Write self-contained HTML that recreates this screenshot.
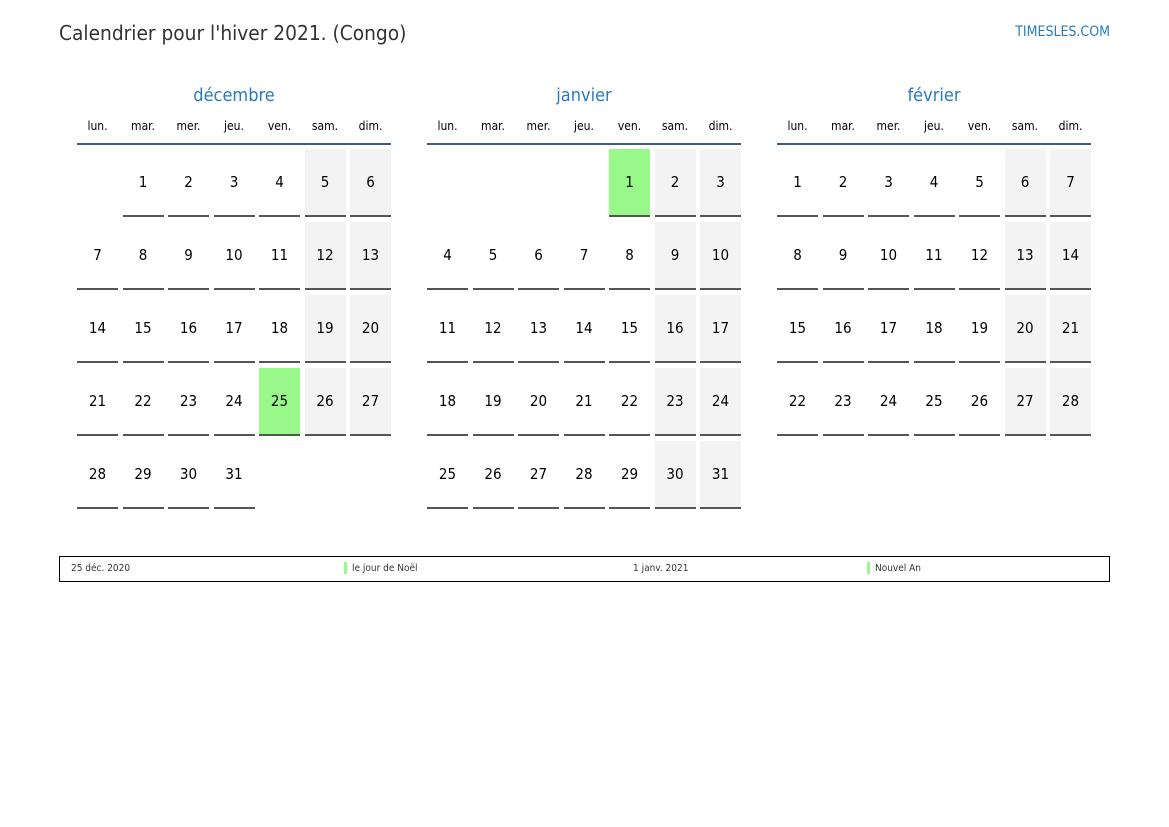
<!DOCTYPE html>
<html><head><meta charset="utf-8"><style>
*{margin:0;padding:0;box-sizing:border-box}
body{width:1169px;height:827px;background:#fff;position:relative;font-family:"DejaVu Sans Condensed","DejaVu Sans","Liberation Sans",sans-serif;color:#000;overflow:hidden}
.title{position:absolute;left:59px;top:21px;font-size:20.7px;color:#333}
.site{position:absolute;right:59px;top:24px;font-size:14px;color:#2a7ac0}
.month{position:absolute;top:85px;width:314px}
.mname{text-align:center;font-size:18px;color:#2a7ac0;height:31px}
.wd{display:grid;grid-template-columns:repeat(7,41px);column-gap:4.5px;font-size:12px;text-align:center;height:27px;line-height:20px}
.hr{height:2px;background:#3a5a8a;margin-bottom:4px}
.grid{display:grid;grid-template-columns:repeat(7,41px);column-gap:4.5px;row-gap:5px}
.c{height:68px;border-bottom:2px solid #555;font-size:15px;text-align:center;line-height:66px}
.e{border-bottom:none}
.w{background:#f3f3f3}
.h{background:#98f98a}
.legend{position:absolute;left:59px;top:556px;width:1051px;height:26px;border:1px solid #000;font-size:10px;color:#333}
.legend span{position:absolute;top:6px}
.bar{display:inline-block;width:3px;height:12px;background:#98f98a;position:absolute;top:5px}
</style></head><body>
<div class="title">Calendrier pour l'hiver 2021. (Congo)</div>
<div class="site">TIMESLES.COM</div>

<div class="month" style="left:77px">
<div class="mname">décembre</div>
<div class="wd"><div>lun.</div><div>mar.</div><div>mer.</div><div>jeu.</div><div>ven.</div><div>sam.</div><div>dim.</div></div>
<div class="hr"></div>
<div class="grid">
<div class="c e"></div><div class="c">1</div><div class="c">2</div><div class="c">3</div><div class="c">4</div><div class="c w">5</div><div class="c w">6</div>
<div class="c">7</div><div class="c">8</div><div class="c">9</div><div class="c">10</div><div class="c">11</div><div class="c w">12</div><div class="c w">13</div>
<div class="c">14</div><div class="c">15</div><div class="c">16</div><div class="c">17</div><div class="c">18</div><div class="c w">19</div><div class="c w">20</div>
<div class="c">21</div><div class="c">22</div><div class="c">23</div><div class="c">24</div><div class="c h">25</div><div class="c w">26</div><div class="c w">27</div>
<div class="c">28</div><div class="c">29</div><div class="c">30</div><div class="c">31</div>
</div></div>

<div class="month" style="left:427px">
<div class="mname">janvier</div>
<div class="wd"><div>lun.</div><div>mar.</div><div>mer.</div><div>jeu.</div><div>ven.</div><div>sam.</div><div>dim.</div></div>
<div class="hr"></div>
<div class="grid">
<div class="c e"></div><div class="c e"></div><div class="c e"></div><div class="c e"></div><div class="c h">1</div><div class="c w">2</div><div class="c w">3</div>
<div class="c">4</div><div class="c">5</div><div class="c">6</div><div class="c">7</div><div class="c">8</div><div class="c w">9</div><div class="c w">10</div>
<div class="c">11</div><div class="c">12</div><div class="c">13</div><div class="c">14</div><div class="c">15</div><div class="c w">16</div><div class="c w">17</div>
<div class="c">18</div><div class="c">19</div><div class="c">20</div><div class="c">21</div><div class="c">22</div><div class="c w">23</div><div class="c w">24</div>
<div class="c">25</div><div class="c">26</div><div class="c">27</div><div class="c">28</div><div class="c">29</div><div class="c w">30</div><div class="c w">31</div>
</div></div>

<div class="month" style="left:777px">
<div class="mname">février</div>
<div class="wd"><div>lun.</div><div>mar.</div><div>mer.</div><div>jeu.</div><div>ven.</div><div>sam.</div><div>dim.</div></div>
<div class="hr"></div>
<div class="grid">
<div class="c">1</div><div class="c">2</div><div class="c">3</div><div class="c">4</div><div class="c">5</div><div class="c w">6</div><div class="c w">7</div>
<div class="c">8</div><div class="c">9</div><div class="c">10</div><div class="c">11</div><div class="c">12</div><div class="c w">13</div><div class="c w">14</div>
<div class="c">15</div><div class="c">16</div><div class="c">17</div><div class="c">18</div><div class="c">19</div><div class="c w">20</div><div class="c w">21</div>
<div class="c">22</div><div class="c">23</div><div class="c">24</div><div class="c">25</div><div class="c">26</div><div class="c w">27</div><div class="c w">28</div>
</div></div>

<div class="legend">
<span style="left:11px">25 déc. 2020</span>
<i class="bar" style="left:284px"></i><span style="left:292px">le jour de Noël</span>
<span style="left:573px">1 janv. 2021</span>
<i class="bar" style="left:807px"></i><span style="left:815px">Nouvel An</span>
</div>
</body></html>
